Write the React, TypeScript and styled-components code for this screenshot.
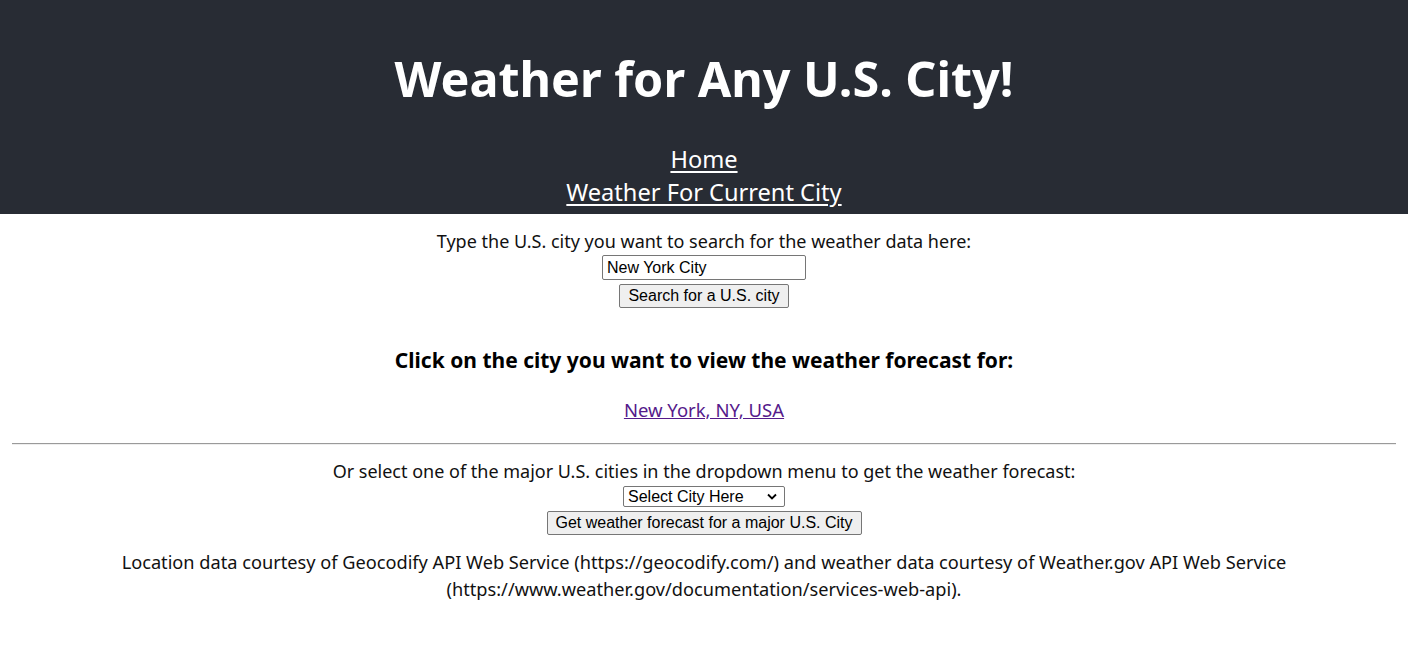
import React from "react";
import styled, { createGlobalStyle } from "styled-components";

const Global = createGlobalStyle`
  html, body { margin: 0; padding: 0; background: #fff; }
  body {
    font-family: "Noto Sans", "Open Sans", sans-serif;
    color: #111;
  }
`;

const Header = styled.header`
  background: #282c34;
  color: #fff;
  display: flex;
  flex-direction: column;
  align-items: center;
  padding: 0 0 5px;
`;

const Title = styled.h1`
  margin: 44px 0 0;
  font-size: 48.5px;
  font-weight: 700;
  line-height: 68px;
`;

const Nav = styled.nav`
  display: flex;
  flex-direction: column;
  align-items: center;
  margin-top: 31px;
`;

const NavLink = styled.a`
  color: #fff;
  font-size: 23.6px;
  line-height: 33px;
  text-decoration: underline;
  text-underline-offset: 3px;
`;

const Main = styled.main`
  display: flex;
  flex-direction: column;
  align-items: center;
  padding: 0 12px;
`;

const Label = styled.p<{ $top?: number }>`
  margin: ${(p) => p.$top ?? 0}px 0 0;
  font-size: 18px;
  line-height: 24px;
  text-align: center;
`;

const TextInput = styled.input`
  font-family: "Liberation Sans", Arial, sans-serif;
  font-size: 16px;
  width: 204px;
  height: 25px;
  box-sizing: border-box;
  border: 1px solid #767676;
  border-radius: 2px;
  padding: 1px 4px;
  margin-top: 2px;
  color: #000;
`;

const Button = styled.button<{ $top?: number }>`
  font-family: "Liberation Sans", Arial, sans-serif;
  font-size: 16px;
  height: 24px;
  padding: 0 8px;
  margin-top: ${(p) => p.$top ?? 4}px;
  background: #efefef;
  border: 1px solid #767676;
  border-radius: 2px;
  color: #000;
`;

const Heading = styled.h3`
  margin: 38px 0 0;
  font-size: 21px;
  font-weight: 700;
  line-height: 28px;
  color: #000;
`;

const CityLink = styled.a`
  margin-top: 24px;
  font-size: 18.5px;
  line-height: 24px;
  color: #551a8b;
  text-decoration: underline;
`;

const Rule = styled.hr`
  align-self: stretch;
  margin: 21px 0 0;
  border: none;
  border-top: 1px solid #9a9a9a;
  border-bottom: 1px solid #eee;
`;

const SelectWrap = styled.div`
  position: relative;
  margin-top: 3px;
  height: 21px;
`;

const Select = styled.select`
  appearance: none;
  -webkit-appearance: none;
  font-family: "Liberation Sans", Arial, sans-serif;
  font-size: 16px;
  width: 162px;
  height: 21px;
  border: 1px solid #767676;
  border-radius: 2px;
  padding: 0 20px 0 4px;
  color: #000;
  background: #fff;
  display: block;
`;

const Chevron = styled.svg`
  position: absolute;
  right: 8px;
  top: 7px;
  pointer-events: none;
`;

const Credits = styled.p`
  margin: 14px 0 0;
  font-size: 18.2px;
  line-height: 27px;
  text-align: center;
  max-width: 1190px;
`;

export default function App() {
  return (
    <>
      <Global />
      <Header>
        <Title>Weather for Any U.S. City!</Title>
        <Nav>
          <NavLink href="#">Home</NavLink>
          <NavLink href="#">Weather For Current City</NavLink>
        </Nav>
      </Header>
      <Main>
        <Label $top={15}>Type the U.S. city you want to search for the weather data here:</Label>
        <TextInput defaultValue="New York City" />
        <Button>Search for a U.S. city</Button>
        <Heading>Click on the city you want to view the weather forecast for:</Heading>
        <CityLink href="#">New York, NY, USA</CityLink>
        <Rule />
        <Label $top={14}>Or select one of the major U.S. cities in the dropdown menu to get the weather forecast:</Label>
        <SelectWrap>
          <Select defaultValue="">
            <option value="">Select City Here</option>
          </Select>
          <Chevron width="10" height="7" viewBox="0 0 10 7">
            <path d="M1 1.5 L5 5.5 L9 1.5" fill="none" stroke="#000" strokeWidth="1.8" />
          </Chevron>
        </SelectWrap>
        <Button $top={4}>Get weather forecast for a major U.S. City</Button>
        <Credits>
          Location data courtesy of Geocodify API Web Service (https://geocodify.com/) and weather data courtesy of
          Weather.gov API Web Service (https://www.weather.gov/documentation/services-web-api).
        </Credits>
      </Main>
    </>
  );
}
